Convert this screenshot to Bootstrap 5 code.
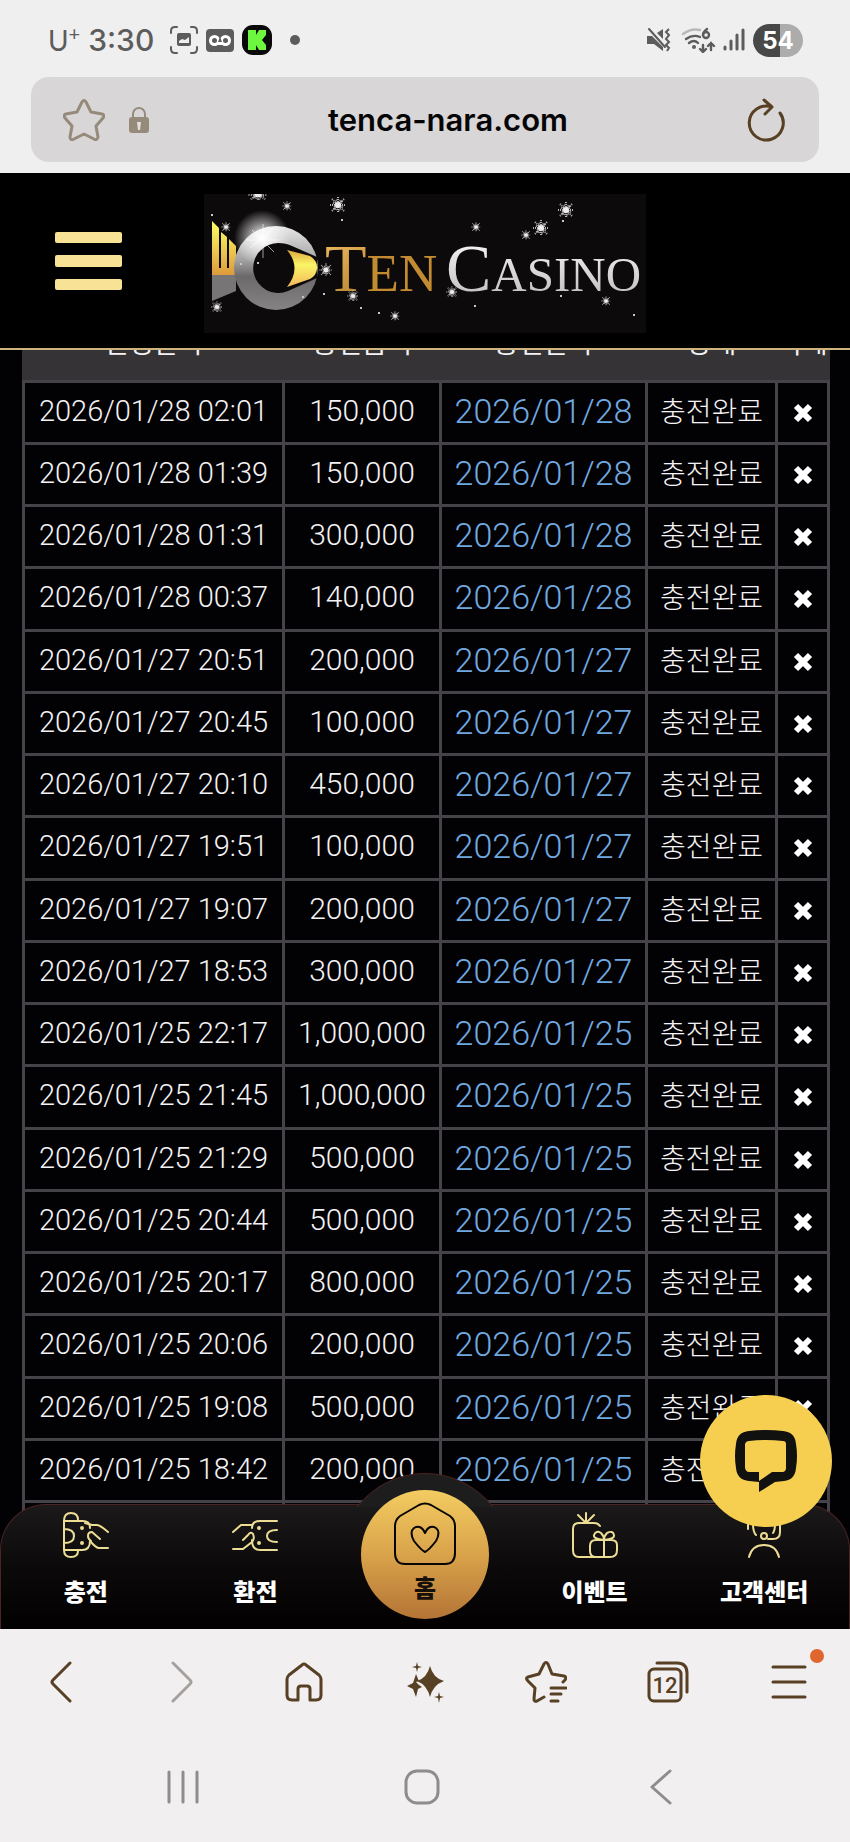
<!DOCTYPE html>
<html lang="ko">
<head>
  <meta charset="UTF-8" />
  <meta name="viewport" content="width=device-width, initial-scale=1" />
  <title>Ten Casino</title>
  <link
    href="https://cdn.jsdelivr.net/npm/bootstrap@5.3.0/dist/css/bootstrap.min.css"
    rel="stylesheet"
  />
  <style>
    body {
      font-family: Roboto, "Noto Sans CJK KR", sans-serif;
      background: #f1eff0;
    }
    svg { display: block; flex: none; }
    button { border: 0; background: none; padding: 0; color: inherit; }

    /* Phone status bar and address bar */
    .phone-top { background: #f0eff0; font-family: Inter, sans-serif; padding-bottom: 11px; }
    .status-bar { height: 77px; padding: 3px 47px 0 48px; color: #5c5c5c; }
    .clock { font-size: 30px; font-weight: 500; line-height: 36px; }
    .carrier { font-size: 28px; font-weight: 400; line-height: 36px; font-family: Lato, sans-serif; }
    .carrier sup { font-size: 20px; top: -10px; }
    .battery {
      width: 50px;
      height: 33px;
      border-radius: 17px;
      background: linear-gradient(90deg, #484848 54%, #acacac 54%);
      color: #fff;
      font-size: 24px;
      font-weight: 700;
      line-height: 33px;
    }
    .address-bar {
      height: 85px;
      margin: 0 31px;
      padding: 0 32px;
      border-radius: 18px;
      background: #d8d6d7;
    }
    .address-input {
      border: 0;
      background: none;
      color: #050505;
      font-size: 31px;
      font-weight: 600;
      min-width: 0;
      padding: 2px 0 0 26px;
    }

    /* Site header */
    .site-header { height: 177px; background: #000; border-bottom: 2px solid #cdb57d; padding: 0 55px; }
    .logo-link { margin: 6px 0 0 82px; }

    /* Charge history */
    .site-main { background: #020103; min-height: 0; }
    .history { height: 100%; overflow: hidden; padding: 0 23px 0 22px; }
    .charge-list {
      table-layout: fixed;
      margin-top: -34px;
      border-collapse: collapse;
      white-space: nowrap;
    }
    .charge-list > :not(caption) > * > * {
      height: 62px;
      padding: 0 0 4px;
      border: 3px solid #454347;
      background: #020103;
      color: #f4f2f4;
      font-weight: 300;
      font-size: 29px;
      line-height: 36px;
    }
    .charge-list > tbody > tr:nth-child(4n) > td { height: 63px; }
    .charge-list > thead > tr > th {
      height: 64px;
      padding-bottom: 22px;
      font-size: 27px;
      font-weight: 400;
      line-height: 27px;
      background: #353336;
      border-color: #353336;
      border-bottom-color: #454347;
    }
    .charge-list > tbody > tr > .charge-sum { font-size: 30px; }
    .charge-list > tbody > tr > .done-date { font-size: 34px; color: #70a9e0; }
    .charge-list > tbody > tr > .done-state { font-size: 28px; padding: 0; }
    .charge-list > tbody > tr > .del-cell { padding: 0; }

    /* Bottom menu */
    .site-nav {
      position: absolute;
      left: 0;
      right: 0;
      bottom: 0;
      height: 125px;
      border: 1px solid #4b2424;
      border-bottom: 0;
      border-radius: 46px 46px 0 0;
      background: linear-gradient(#1b1919, #0b090a 50%, #020001);
    }
    .site-nav::before {
      content: "";
      position: absolute;
      left: calc(50% - 86px);
      top: -32px;
      width: 172px;
      height: 172px;
      border: 1px solid #4b2424;
      border-radius: 50%;
      background: #1e1d1d;
      clip-path: inset(0 0 138px 0);
    }
    .menu-link {
      color: #fff;
      font-family: "Noto Sans CJK KR", sans-serif;
      font-size: 24px;
      font-weight: 900;
      line-height: 30px;
      text-decoration: none;
      padding-top: 7px;
      gap: 18px;
    }
    .home-link {
      position: absolute;
      left: calc(50% - 64px);
      top: -15px;
      width: 128px;
      height: 129px;
      border-radius: 50%;
      padding-top: 12px;
      gap: 7px;
      color: #15100a;
      background: linear-gradient(#f3cc62, #d9a34a 50%, #b47436);
    }
    .chat-btn {
      position: absolute;
      right: 18px;
      bottom: 102px;
      width: 132px;
      height: 132px;
      border-radius: 50%;
      background: #f6cf50;
    }

    /* Browser toolbar and system keys */
    .browser-bar { height: 106px; color: #584024; }
    .system-bar { height: 107px; padding: 0 70px 4px 64px; color: #8f8c8e; }
    .news-dot {
      position: absolute;
      right: -17px;
      top: -16px;
      width: 14px;
      height: 14px;
      border-radius: 50%;
      background: #e0662f;
    }
  </style>
</head>
<body class="d-flex flex-column vh-100 overflow-hidden">

  <div class="phone-top">
    <div class="status-bar d-flex align-items-center justify-content-between">
      <div class="d-flex align-items-center">
        <span class="carrier">U<sup>+</sup></span>
        <span class="clock ms-2">3:30</span>
        <svg class="ms-3" width="28" height="28" viewBox="0 0 28 28" fill="none" stroke="#5c5c5c" stroke-width="2" stroke-linecap="round">
          <path d="M1 7V5Q1 1 5 1H7M21 1h2q4 0 4 4v2M27 21v2q0 4-4 4h-2M7 27H5q-4 0-4-4v-2" />
          <rect x="7" y="7" width="14" height="13" rx="2" fill="#5c5c5c" stroke="none" />
          <path d="M9 17v-2l3-2 3 1 4-3v6z" fill="#f0eff0" stroke="none" />
        </svg>
        <svg class="ms-2" width="28" height="23" viewBox="0 0 28 23">
          <rect width="28" height="23" rx="4" fill="#5c5c5c" />
          <path d="M8 12h12v4H8z" fill="#fff" />
          <circle cx="8.500" cy="11.500" r="5.500" fill="#fff" /><circle cx="19.500" cy="11.500" r="5.500" fill="#fff" />
          <circle cx="8.500" cy="11.500" r="2.500" fill="#5c5c5c" /><circle cx="19.500" cy="11.500" r="2.500" fill="#5c5c5c" />
          <path d="M14 8l-2 5h4z" fill="#5c5c5c" />
        </svg>
        <svg class="ms-2" width="30" height="30" viewBox="0 0 30 30">
          <rect width="30" height="30" rx="11" fill="#090909" />
          <path d="M6 5h8v5l3-5h7v5l-4 5 4 5v5h-7l-3-5v5H6z" fill="#6cf83f" />
        </svg>
        <svg class="ms-3" width="14" height="10"><circle cx="7" cy="5" r="5" fill="#5c5c5c" /></svg>
      </div>
      <div class="d-flex align-items-center">
        <svg width="24" height="24" viewBox="0 0 24 24" fill="#5c5c5c">
          <path d="M0 8h5l11 11v4L7 16H0zM10 5l6-4v10z" />
          <path d="M2 1l16 18" stroke="#5c5c5c" stroke-width="2" stroke-linecap="round" />
          <path d="M22 1l-3 3 3 3-3 4 3 3-3 3 3 3-2 3" fill="none" stroke="#5c5c5c" stroke-width="2" />
        </svg>
        <svg class="ms-2" width="38" height="26" viewBox="0 0 38 26" fill="none" stroke="#5c5c5c" stroke-width="2.400" stroke-linecap="round">
          <path d="M4 7Q12 1 21 3" stroke="#b9b9b9" />
          <path d="M7 12q7-5 14-2M10 16q5-4 9 0" />
          <circle cx="15" cy="20" r="2" fill="#5c5c5c" stroke="none" />
          <path d="M28 2q-4 3-4 6M24 18v7M21 22l3 3 3-3M32 23v-7M29 19l3-3 3 3" />
          <circle cx="27" cy="8" r="3" />
        </svg>
        <svg class="ms-1" width="24" height="24" viewBox="0 0 24 24" stroke="#5c5c5c" stroke-width="3" stroke-linecap="round">
          <path d="M4 19v2M10 13v8M16 7v14M22 2v19" />
        </svg>
        <span class="battery text-center ms-2">54</span>
      </div>
    </div>
    <div class="address-bar d-flex align-items-center">
      <button type="button" aria-label="Bookmark">
        <svg width="42" height="42" viewBox="0 0 42 42" fill="none" stroke="#968b7a" stroke-width="3" stroke-linejoin="round">
          <path d="M19 3Q21 0 23 3L28 13 39 15Q42 16 40 19L33 27 35 38Q34 42 31 40L21 35 11 40Q7 42 7 38L9 27 2 19Q0 16 3 15L14 13Z" />
        </svg>
      </button>
      <svg class="ms-4" width="20" height="28" viewBox="0 0 20 28">
        <path d="M4 13V8a6 6 0 0 1 12 0v5" fill="none" stroke="#968b7a" stroke-width="2" />
        <rect y="11" width="20" height="16" rx="3" fill="#968b7a" />
        <path d="M8 16h4l-1 8H9z" fill="#e4dfdc" />
      </svg>
      <input class="address-input text-center flex-grow-1" type="text" value="tenca-nara.com" aria-label="Address" />
      <button type="button" class="ms-4" aria-label="Reload">
        <svg width="42" height="44" viewBox="0 0 42 44" fill="none" stroke="#584024" stroke-width="3" stroke-linecap="round" stroke-linejoin="round">
          <path d="M35 15A17 17 0 1 1 27 9M19 2l8 7-7 7" />
        </svg>
      </button>
    </div>
  </div>

  <header class="site-header d-flex align-items-center">
    <button type="button" aria-label="Menu">
      <svg width="67" height="58" viewBox="0 0 67 58" fill="#f8e296">
        <rect width="67" height="11" rx="2" /><rect y="23" width="67" height="12" rx="2" /><rect y="47" width="67" height="11" rx="2" />
      </svg>
    </button>
    <a class="logo-link" href="#" aria-label="Ten Casino">
      <svg width="442" height="139" viewBox="0 0 442 139">
        <defs>
          <linearGradient id="goldText" x2="1" y2="1"><stop stop-color="#f5c065" /><stop offset="1" stop-color="#8f6011" /></linearGradient>
          <linearGradient id="silverText" x2="0" y2="1"><stop stop-color="#fff" /><stop offset="1" stop-color="#b9b7b8" /></linearGradient>
          <linearGradient id="ringFill" x2="0" y2="1"><stop stop-color="#e8e8e8" /><stop offset=".4" stop-color="#a5a4a5" /><stop offset=".6" stop-color="#6b696a" /><stop offset="1" stop-color="#858384" /></linearGradient>
          <linearGradient id="goldFill" x2="0" y2="1"><stop stop-color="#ffff66" /><stop offset="1" stop-color="#dc9a3c" /></linearGradient>
          <linearGradient id="eyeFill" x2="0" y2="1"><stop stop-color="#dfa63c" /><stop offset=".4" stop-color="#fbf566" /><stop offset="1" stop-color="#f2b75c" /></linearGradient>
          <radialGradient id="glow"><stop stop-color="#fff" /><stop offset=".5" stop-color="#fff" stop-opacity=".5" /><stop offset="1" stop-color="#fff" stop-opacity="0" /></radialGradient>
          <g id="flake" stroke="#b5b3b5" stroke-width="2" stroke-dasharray="1 1">
            <path d="M-8 0H8M0-8V8M-6-6L6 6M6-6L-6 6M-5-2L5 2M-2 5L2-5M-4 4L-1-6M4-4L1 6" />
            <circle r="3" fill="#eee" stroke="none" />
          </g>
        </defs>
        <rect width="442" height="139" fill="#0d0a0b" />
        <path d="M8 81L32 80 32 97 8 107z" fill="#777576" />
        <path d="M8 27L15 34V74H17V38L23 43V74H25V45L32 52V81H8z" fill="url(#goldFill)" />
        <circle cx="72" cy="74" r="42" fill="url(#ringFill)" />
        <circle cx="58" cy="44" r="28" fill="url(#glow)" />
        <path d="M113 63L88 52Q82 49 74 49A25 25 0 1 0 84 97L113 84z" fill="#0d0a0b" />
        <path d="M83 56L106 62Q114 67 113 75 112 82 106 85L83 93Q98 74 83 56z" fill="url(#eyeFill)" />
        <path d="M59 30v34M42 46h32M48 36l22 22M46 54l24-20" stroke="#fff" stroke-width="1" opacity=".6" />
        <text y="97" font-family="Liberation Serif, serif" font-size="53"><tspan x="121" font-size="68" fill="url(#goldText)">T</tspan><tspan fill="#c28a31">EN</tspan></text>
        <text y="97" font-family="Liberation Serif, serif" font-size="49" fill="url(#silverText)"><tspan x="242" font-size="68">C</tspan><tspan>ASINO</tspan></text>
        <use href="#flake" x="134" y="11" /><use href="#flake" x="362" y="16" /><use href="#flake" x="337" y="34" />
        <use href="#flake" transform="translate(54 1) scale(1.200 .7)" />
        <use href="#flake" transform="translate(83 12) scale(.6)" /><use href="#flake" transform="translate(22 33) scale(.6)" />
        <use href="#flake" transform="translate(13 113) scale(.7)" /><use href="#flake" transform="translate(122 76) scale(.8)" />
        <use href="#flake" transform="translate(149 102) scale(.7)" /><use href="#flake" transform="translate(191 122) scale(.6)" />
        <use href="#flake" transform="translate(272 33) scale(.6)" /><use href="#flake" transform="translate(322 41) scale(.6)" />
        <use href="#flake" transform="translate(248 98) scale(.7)" /><use href="#flake" transform="translate(402 107) scale(.6)" />
        <path d="M7 21h2M137 26h2M156 114h2M174 119h2M119 100h2M270 112h2M356 102h2M429 121h2M98 103h2M358 27h2M53 69h2M36 70h2" stroke="#c8c6c8" stroke-width="2" />
      </svg>
    </a>
  </header>

  <main class="site-main position-relative flex-grow-1">
    <div class="history">
      <table class="table charge-list text-center align-middle mb-0">
        <colgroup>
          <col width="260" /><col width="157" /><col width="206" /><col width="130" /><col width="52" />
        </colgroup>
        <thead>
          <tr><th>신청날짜</th><th>충전금액</th><th>충전날짜</th><th>상태</th><th>삭제</th></tr>
        </thead>
        <tbody id="chargeRows">
          <!-- Rows go here -->
        </tbody>
      </table>
    </div>

    <nav class="site-nav d-flex">
      <a class="menu-link col d-flex flex-column align-items-center" href="#">
        <svg width="46" height="46" viewBox="0 0 46 46" fill="none" stroke="#ecdc94" stroke-width="2" stroke-linecap="round">
          <path d="M1 8V38M1 9H20Q27 9 27 16M27 29Q27 38 19 38H1M1 9Q1 1 8 1 15 1 15 8M1 38Q1 45 8 45 15 45 15 39M1 17Q11 17 11 24 11 31 1 31" />
          <path d="M22 11L29 13H34Q37 13 45 20M27 29Q33 36 36 36H45M37 27L29 20Q25 20 25 24 25 27 28 29" />
          <circle cx="19" cy="16" r="1" fill="#ecdc94" /><circle cx="19" cy="31" r="1" fill="#ecdc94" />
        </svg>
        <span>충전</span>
      </a>
      <a class="menu-link col d-flex flex-column align-items-center" href="#">
        <svg width="46" height="46" viewBox="0 0 46 46" fill="none" stroke="#ecdc94" stroke-width="2" stroke-linecap="round">
          <path d="M45 9H28Q20 9 20 16M20 28Q20 38 28 38H45M45 18Q35 18 35 24 35 30 45 30" />
          <path d="M1 20L9 13H20M1 37H11L20 30Q23 27 21 22 19 19 16 23L11 28" />
          <circle cx="27" cy="16" r="1" fill="#ecdc94" /><circle cx="27" cy="31" r="1" fill="#ecdc94" />
        </svg>
        <span>환전</span>
      </a>
      <div class="col"></div>
      <a class="menu-link col d-flex flex-column align-items-center" href="#">
        <svg width="46" height="46" viewBox="0 0 46 46" fill="none" stroke="#ecdc94" stroke-width="2" stroke-linecap="round">
          <path d="M28 14Q26 11 22 11H7Q1 11 1 17V38Q1 45 7 45H38Q45 45 45 38V33Q45 28 39 28H24Q18 28 18 34V39Q18 45 24 45M32 28V45" />
          <path d="M14 1V10M6 3L13 10M22 3L15 10M32 28Q21 27 22 23 24 18 29 21 32 24 32 28 32 24 35 21 41 18 42 23 43 27 32 28" />
        </svg>
        <span>이벤트</span>
      </a>
      <a class="menu-link col d-flex flex-column align-items-center" href="#">
        <svg width="46" height="46" viewBox="0 0 46 46" fill="none" stroke="#ecdc94" stroke-width="2" stroke-linecap="round">
          <path d="M8 45Q11 33 23 33 35 33 38 45M12 12Q12 20 15 23M34 12Q34 18 32 21M7 12V17M39 12V20Q39 27 32 27H27" />
          <circle cx="23" cy="24" r="3" /><path d="M12 10Q14 2 23 2 32 2 34 10" />
        </svg>
        <span>고객센터</span>
      </a>
      <a class="menu-link home-link d-flex flex-column align-items-center" href="#">
        <svg width="62" height="63" viewBox="0 0 62 63" fill="none" stroke="#080604" stroke-width="2" stroke-linejoin="round">
          <path d="M25 3Q31 0 37 3L56 14Q61 18 61 24V51Q61 62 51 62H11Q1 62 1 51V24Q1 18 6 14Z" />
          <path d="M31 50Q27 48 20 39 15 30 20 26 27 22 31 31 35 22 42 26 47 30 42 39 35 48 31 50Z" />
        </svg>
        <span>홈</span>
      </a>
    </nav>

    <button type="button" class="chat-btn d-flex align-items-center justify-content-center" aria-label="Chat">
      <svg width="62" height="62" viewBox="0 0 62 62">
        <path fill="#111210" fill-rule="evenodd" d="M14 1Q31-1 48 1 60 2 61 14 63 26 61 38 60 50 49 51L40 52 24 62V52L14 51Q2 50 1 38-1 26 1 14 2 2 14 1zM14 11Q11 11 10 14V38Q11 42 14 42H24V51L37 42H48Q51 41 51 38V14Q51 11 48 11 31 9 14 11z" />
      </svg>
    </button>
  </main>

  <div class="browser-bar row g-0 align-items-center flex-nowrap">
    <button type="button" class="col d-flex justify-content-center" aria-label="Back">
      <svg width="22" height="42" viewBox="0 0 22 42" fill="none" stroke="currentColor" stroke-width="3" stroke-linecap="round"><path d="M20 2L3 19Q1 21 3 23L20 40" /></svg>
    </button>
    <button type="button" class="col d-flex justify-content-center" aria-label="Forward">
      <svg width="22" height="42" viewBox="0 0 22 42" fill="none" stroke="#a5a19f" stroke-width="3" stroke-linecap="round"><path d="M2 2L19 19Q21 21 19 23L2 40" /></svg>
    </button>
    <button type="button" class="col d-flex justify-content-center" aria-label="Home">
      <svg width="38" height="40" viewBox="0 0 38 40" fill="none" stroke="currentColor" stroke-width="3" stroke-linejoin="round">
        <path d="M17 3Q19 1 21 3L34 13Q36 15 36 17V33Q36 38 31 38H25V27Q25 24 22 24H16Q13 24 13 27V38H7Q2 38 2 33V17Q2 15 4 13Z" />
      </svg>
    </button>
    <button type="button" class="col d-flex justify-content-center" aria-label="Assistant">
      <svg width="38" height="42" viewBox="0 0 38 42" fill="currentColor">
        <path d="M11 1l1 4 4 1-4 1-1 4-1-4-4-1 4-1zM10 13l2 5 1 2-3 1 3 3 3 2-4 2-2 8-3-8-6-3 6-3z" />
        <path d="M24 5Q27 17 38 20 27 24 24 36 21 24 11 20 21 17 24 5zM33 31l1 4 4 1-4 1-1 5-1-5-4-1 4-1z" />
      </svg>
    </button>
    <button type="button" class="col d-flex justify-content-center" aria-label="Bookmarks">
      <svg width="42" height="42" viewBox="0 0 42 42" fill="none" stroke="currentColor" stroke-width="3" stroke-linecap="round" stroke-linejoin="round">
        <path d="M38 21L40 19Q42 16 39 15L27 13 23 3Q21 0 19 3L14 13 3 16Q0 17 3 20L10 27 9 38Q9 41 12 40L19 36M26 27H41M26 33H36M26 40H33" />
      </svg>
    </button>
    <button type="button" class="col d-flex justify-content-center" aria-label="Tabs">
      <svg width="42" height="42" viewBox="0 0 42 42" fill="none" stroke="currentColor" stroke-width="3" stroke-linecap="round">
        <rect x="2" y="8" width="32" height="32" rx="5" /><path d="M10 2H30Q40 2 40 12V31" />
        <text x="18" y="32" text-anchor="middle" font-size="22" font-weight="500" fill="currentColor" stroke="none">12</text>
      </svg>
    </button>
    <button type="button" class="col d-flex justify-content-center" aria-label="Tools">
      <span class="position-relative">
        <svg width="36" height="34" viewBox="0 0 36 34" stroke="currentColor" stroke-width="3" stroke-linecap="round"><path d="M2 2H34M2 17H34M2 32H34" /></svg>
        <span class="news-dot"></span>
      </span>
    </button>
  </div>

  <div class="system-bar d-flex align-items-center">
    <button type="button" class="col d-flex justify-content-center" aria-label="Recent apps">
      <svg width="32" height="34" viewBox="0 0 32 34" stroke="currentColor" stroke-width="3" stroke-linecap="round"><path d="M2 2V32M16 2V32M30 2V32" /></svg>
    </button>
    <button type="button" class="col d-flex justify-content-center" aria-label="Home screen">
      <svg width="36" height="36" viewBox="0 0 36 36" fill="none" stroke="currentColor" stroke-width="3"><rect x="2" y="2" width="32" height="32" rx="11" /></svg>
    </button>
    <button type="button" class="col d-flex justify-content-center" aria-label="System back">
      <svg width="22" height="36" viewBox="0 0 22 36" fill="none" stroke="currentColor" stroke-width="3" stroke-linecap="round" stroke-linejoin="round"><path d="M20 2L2 18 20 34" /></svg>
    </button>
  </div>

  <script src="https://cdn.jsdelivr.net/npm/bootstrap@5.3.0/dist/js/bootstrap.bundle.min.js"></script>
  <script>
    const charges = [
      ["2026/01/28 02:01", "150,000"],
      ["2026/01/28 01:39", "150,000"],
      ["2026/01/28 01:31", "300,000"],
      ["2026/01/28 00:37", "140,000"],
      ["2026/01/27 20:51", "200,000"],
      ["2026/01/27 20:45", "100,000"],
      ["2026/01/27 20:10", "450,000"],
      ["2026/01/27 19:51", "100,000"],
      ["2026/01/27 19:07", "200,000"],
      ["2026/01/27 18:53", "300,000"],
      ["2026/01/25 22:17", "1,000,000"],
      ["2026/01/25 21:45", "1,000,000"],
      ["2026/01/25 21:29", "500,000"],
      ["2026/01/25 20:44", "500,000"],
      ["2026/01/25 20:17", "800,000"],
      ["2026/01/25 20:06", "200,000"],
      ["2026/01/25 19:08", "500,000"],
      ["2026/01/25 18:42", "200,000"]
    ];
    const chargeRows = document.getElementById("chargeRows");

    charges.forEach(([requested, amount]) => {
      const row = document.createElement("tr");
      row.innerHTML = `
        <td>${requested}</td>
        <td class="charge-sum">${amount}</td>
        <td class="done-date">${requested.slice(0, 10)}</td>
        <td class="done-state">충전완료</td>
        <td class="del-cell">
          <button type="button" class="d-block mx-auto" aria-label="삭제">
            <svg width="20" height="20" viewBox="0 0 20 20" stroke="#fff" stroke-width="6"><path d="M3 3L17 17M17 3L3 17" /></svg>
          </button>
        </td>
      `;
      chargeRows.appendChild(row);
    });

    // Empty closing row under the menu
    const lastRow = document.createElement("tr");
    lastRow.innerHTML = "<td></td><td></td><td></td><td></td><td></td>";
    chargeRows.appendChild(lastRow);
  </script>

</body>
</html>
